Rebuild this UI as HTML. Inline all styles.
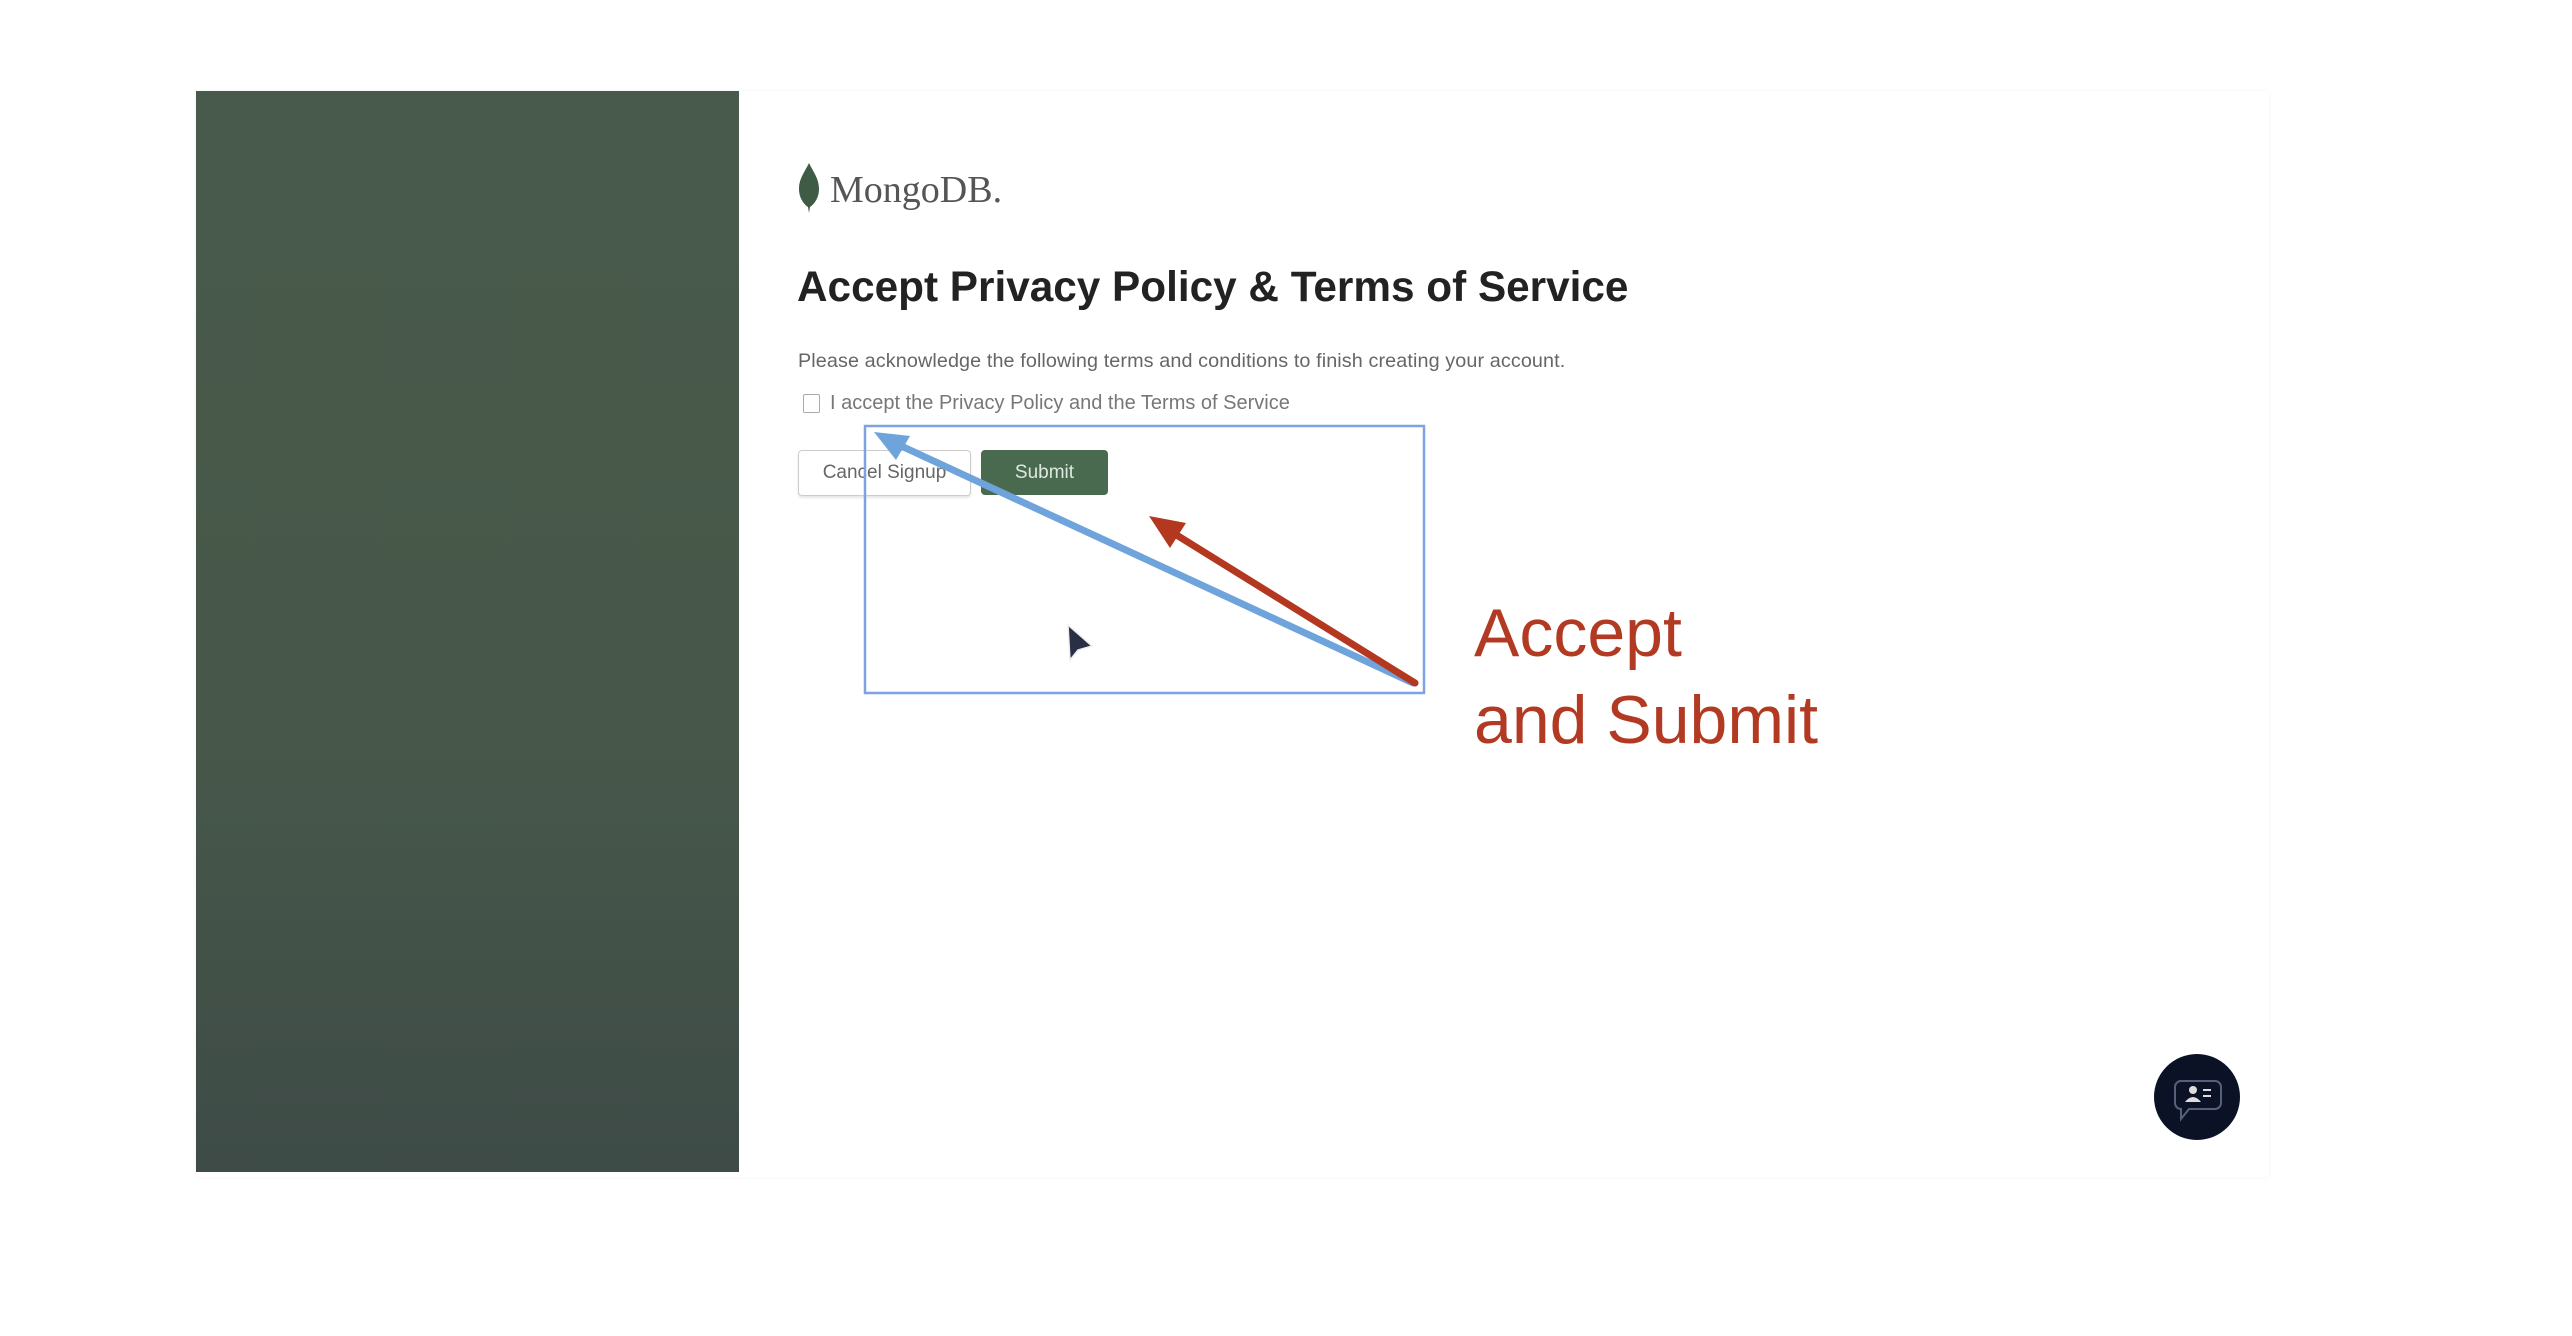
<!DOCTYPE html>
<html><head><meta charset="utf-8"><style>
html,body{margin:0;padding:0;width:2572px;height:1336px;background:#fff;overflow:hidden;font-family:"Liberation Sans",sans-serif;}
.card{position:absolute;left:196px;top:91px;width:2073px;height:1086px;background:#fff;box-shadow:0 0 4px rgba(0,0,0,0.06);}
.panel{position:absolute;left:196px;top:91px;width:543px;height:1081px;background:linear-gradient(180deg,#485a4b 0%,#47584a 60%,#3e4b47 100%);}
.abs{position:absolute;white-space:nowrap;}
</style></head><body>
<div class="card"></div>
<div class="panel"></div>
<svg class="abs" style="left:796px;top:163px" width="26" height="50" viewBox="0 0 26 50"><path d="M13 0 C8 10 3 16 3 26 C3 36 9 42 12 44 L13 50 L14 44 C17 42 23 36 23 26 C23 16 18 10 13 0Z" fill="#3f5a45"/></svg>
<div class="abs" style="left:830px;top:168px;font-family:'Liberation Serif',serif;font-size:38px;color:#555;">MongoDB.</div>
<div class="abs" style="left:797px;top:263px;font-size:42.3px;font-weight:bold;color:#222;">Accept Privacy Policy &amp; Terms of Service</div>
<div class="abs" style="left:798px;top:350px;font-size:19.8px;color:#666;letter-spacing:0.1px;">Please acknowledge the following terms and conditions to finish creating your account.</div>
<div class="abs" style="left:803px;top:394px;width:15px;height:17px;border:1px solid #aaa;border-radius:2px;"></div>
<div class="abs" style="left:830px;top:392px;font-size:20px;color:#777;">I accept the Privacy Policy and the Terms of Service</div>
<div class="abs" style="left:798px;top:450px;width:171px;height:44px;border:1px solid #ccc;border-radius:4px;box-shadow:0 2px 2px rgba(0,0,0,0.1);font-size:19px;color:#666;text-align:center;line-height:44px;">Cancel Signup</div>
<div class="abs" style="left:981px;top:450px;width:127px;height:45px;background:#4a6a4f;border-radius:4px;font-size:19px;color:#dfe8df;text-align:center;line-height:45px;">Submit</div>
<svg class="abs" style="left:0;top:0" width="2572" height="1336">
<rect x="865" y="426" width="559" height="267" fill="none" stroke="#7fa2e2" stroke-width="2.5"/>
<line x1="1413" y1="683" x2="884" y2="438" stroke="#6fa3dc" stroke-width="7" stroke-linecap="round"/>
<polygon points="874,432 910,436 896,460" fill="#6fa3dc"/>
<line x1="1415" y1="683" x2="1162" y2="526" stroke="#b3381f" stroke-width="7" stroke-linecap="round"/>
<polygon points="1149,516 1186,523 1170,548" fill="#b3381f"/>
<path d="M1068 625 L1070 660 L1078 650 L1092 646 Z" fill="#2a2f45" stroke="#eee" stroke-width="1.5"/>
<g transform="translate(-11,-4)">
<circle cx="2208" cy="1101" r="43" fill="#0b1226"/>
<path d="M2190 1085 h36 a6 6 0 0 1 6 6 v16 a6 6 0 0 1 -6 6 h-26 l-8 10 v-10 a6 6 0 0 1 -6 -6 v-16 a6 6 0 0 1 6 -6z" fill="none" stroke="#55607a" stroke-width="2"/>
<circle cx="2204" cy="1094" r="4" fill="#ddd"/><path d="M2196 1106 q8 -10 16 0z" fill="#ddd"/>
<line x1="2214" y1="1094" x2="2222" y2="1094" stroke="#ddd" stroke-width="2"/><line x1="2214" y1="1100" x2="2222" y2="1100" stroke="#ddd" stroke-width="2"/>
</g>
</svg>
<div class="abs" style="left:1474px;top:590px;font-size:68px;color:#b23a22;line-height:87px;">Accept<br>and Submit</div>
</body></html>
